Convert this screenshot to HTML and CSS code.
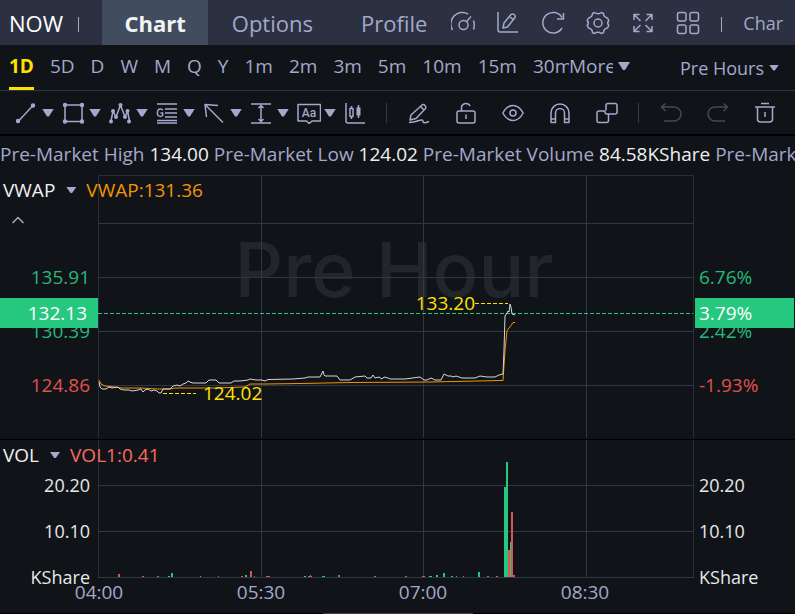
FILE: index.html
```html
<!DOCTYPE html>
<html lang="en">
<head>
<meta charset="utf-8">
<title>Chart</title>
<link rel="stylesheet" href="styles.css">
</head>
<body>
<header class="topbar">
  <span class="symbol">NOW</span>
  <span class="bar-sep"></span>
  <nav class="tabs">
    <a class="tab tab-active" href="#chart">Chart</a>
    <a class="tab" href="#options">Options</a>
    <a class="tab" href="#profile">Profile</a>
  </nav>
  <div class="top-actions">
    <button class="icon-btn" aria-label="Performance"><svg viewBox="0 0 24 24"><path d="M1.500 19A11.500 11.500 0 0 1 17 3M22.500 9.500q1.500 5 0 9"/><circle cx="12.500" cy="14" r="4.500"/><path d="m15.500 10.500 4.500-5"/></svg></button>
    <button class="icon-btn" aria-label="Annotate"><svg viewBox="0 0 24 24"><path d="M2 1v18q0 2 2 2h18M7 17l1-5 7-8.500q1.500-1.200 3.200 0t.6 3.200L11.500 16zM13.500 5.500l3.500 3"/></svg></button>
    <button class="icon-btn" aria-label="Refresh"><svg viewBox="0 0 24 24"><path d="M21 17A10.300 10.300 0 1 1 21 6.500M22.500 2v6H16"/></svg></button>
    <button class="icon-btn" aria-label="Settings"><svg viewBox="0 0 24 24"><circle cx="12" cy="12" r="4"/><path d="M8.500 1.500q3.500 2.500 7 0l2 1q0 3.500 4 4.500l1.300 2.500q-2.300 2.500 0 5L21.500 17q-4 1-4 4.500l-2 1q-3.500-2.500-7 0l-2-1q0-3.500-4-4.500L1.200 14.500q2.300-2.500 0-5L2.500 7q4-1 4-4.500z"/></svg></button>
    <button class="icon-btn" aria-label="Full screen"><svg viewBox="0 0 24 24"><path d="M3 9V3.500h5.500M3.500 4l6 6M15.500 3.500H21V9M20.500 4l-6 6M3 15v5.500h5.500M3.500 20l6-6M21 15v5.500h-5.500M20.500 20l-6-6"/></svg></button>
    <button class="icon-btn" aria-label="Layout"><svg viewBox="0 0 24 24"><rect x="1.500" y="1.500" width="8.500" height="8.500" rx="2"/><rect x="14" y="1.500" width="8.500" height="8.500" rx="2"/><rect x="1.500" y="14" width="8.500" height="8.500" rx="2"/><rect x="14" y="14" width="8.500" height="8.500" rx="2"/></svg></button>
  </div>
  <span class="bar-sep"></span>
  <a class="more-link" href="#charts">Char</a>
</header>

<div class="periods">
  <div class="period-list">
    <button class="period period-active">1D</button>
    <button class="period">5D</button>
    <button class="period">D</button>
    <button class="period">W</button>
    <button class="period">M</button>
    <button class="period">Q</button>
    <button class="period">Y</button>
    <button class="period">1m</button>
    <button class="period">2m</button>
    <button class="period">3m</button>
    <button class="period">5m</button>
    <button class="period">10m</button>
    <button class="period">15m</button>
    <button class="period">30m</button>
  </div>
  <button class="period more"><span class="more-text">More</span><span class="caret"></span></button>
  <button class="period session">Pre Hours<span class="caret caret-small"></span></button>
</div>

<div class="toolbar">
  <button class="tool" aria-label="Line"><svg viewBox="0 0 22 22"><path d="m4 18.500 14-15"/><g class="dots"><circle cx="3" cy="19" r="2.200"/><circle cx="18" cy="3.500" r="2.200"/></g></svg><span class="caret"></span></button>
  <button class="tool" aria-label="Rectangle"><svg viewBox="0 0 22 22"><path d="M3 3h17v16.500H3z"/><g class="dots"><circle cx="3" cy="3" r="2.200"/><circle cx="20" cy="3" r="2.200"/><circle cx="3" cy="19.500" r="2.200"/><circle cx="20" cy="19.500" r="2.200"/></g></svg><span class="caret"></span></button>
  <button class="tool" aria-label="Wave"><svg viewBox="0 0 22 22"><path d="m2 19 2-10 3 6 4.500-12L16 15l2.500-6 2 10"/><g class="dots"><circle cx="2" cy="19.500" r="2"/><circle cx="4" cy="9" r="2"/><circle cx="7" cy="15" r="2"/><circle cx="11.500" cy="3" r="2"/><circle cx="16" cy="15" r="2"/><circle cx="18.500" cy="9" r="2"/><circle cx="20" cy="19.500" r="2"/></g></svg><span class="caret"></span></button>
  <button class="tool" aria-label="Gann"><svg viewBox="0 0 22 22"><path d="M1 2h20M9 7h12M9 11h12M9 15h12M1 18.500h20M1 21h20M7 8q-3-2-4.700 0t-.3 5.500q2.500 1.800 4.700 0V11H4.500"/></svg><span class="caret"></span></button>
  <button class="tool" aria-label="Arrow"><svg viewBox="0 0 22 22"><path d="M20 20.500 2 2.500M3.500 15 2 2.500 15 3.500"/></svg><span class="caret"></span></button>
  <button class="tool" aria-label="Measure"><svg viewBox="0 0 22 22"><path d="M1 2h20M1 21h20M11 3.500v16M8.500 6 11 3.500 13.500 6M8.500 17l2.500 2.500 2.500-2.500"/></svg><span class="caret"></span></button>
  <button class="tool tool-wide" aria-label="Text"><svg viewBox="0 0 24 22"><path d="M1 2.500h22.500V19H15l-2.800 2.500L9.500 19H1z"/><text x="12" y="15" class="tool-text">Aa</text></svg><span class="caret"></span></button>
  <button class="tool tool-last" aria-label="Candles"><svg viewBox="0 0 22 22"><path d="M2 1v18q0 2 2 2h17M6 6.500h3v8H6zM7.500 4v2.500M7.500 14.500V17M14.500 3v13"/><path class="solid" d="M12.500 5.500h4v8h-4z"/></svg></button>
  <span class="tool-sep"></span>
  <button class="tool" aria-label="Brush"><svg viewBox="0 0 22 22"><path d="m2 18 1-5L14 3q1.500-1 3 .500t.500 3L8 16.500 2 18zM12.500 4.500l3.500 3.500M1 20.500q6-.500 10-2t4 1 6 0"/></svg></button>
  <button class="tool" aria-label="Unlock"><svg viewBox="0 0 22 22"><rect x="2" y="9" width="18" height="12" rx="2"/><path d="M6.500 9V5q1-3.500 4.500-3.500 3 0 4 2.500M11 12.500v4.500"/></svg></button>
  <button class="tool" aria-label="Show"><svg viewBox="0 0 22 22"><path d="M.8 11Q5 3.500 11 3.500T21.200 11Q17 18.500 11 18.500T.8 11z"/><circle cx="11" cy="11" r="3"/></svg></button>
  <button class="tool" aria-label="Magnet"><svg viewBox="0 0 22 22"><path d="M2 20.500V11a9 9 0 0 1 18 0v9.500h-4.500V11a4.500 4.500 0 0 0-9 0v9.500zM2 17h4.500M15.500 17H20"/></svg></button>
  <button class="tool tool-last" aria-label="Combine"><svg viewBox="0 0 22 22"><path d="M10 8.500V3.500Q10 1.500 12 1.500h7q2 0 2 2v6.500q0 2-2 2h-6.500"/><path d="M9 9H3q-2 0-2 2v7.500q0 2 2 2h7.500q2 0 2-2V12H11q-2 0-2-2z"/></svg></button>
  <span class="tool-sep"></span>
  <button class="tool" aria-label="Undo" disabled><svg viewBox="0 0 22 22"><path d="M5.500 1.500 1.500 5l4 4M1.500 5H14a6.500 6.500 0 0 1 0 14H4"/></svg></button>
  <button class="tool" aria-label="Redo" disabled><svg viewBox="0 0 22 22"><path d="m16.500 1.500 4 3.500-4 4M20.500 5H8a6.500 6.500 0 0 0 0 14h10"/></svg></button>
  <button class="tool tool-last" aria-label="Delete"><svg viewBox="0 0 22 22"><path d="M7 1.500h8M1 5h20M3.500 5v12q0 3 3 3h9q3 0 3-3V5M11 10v5"/></svg></button>
</div>

<div class="quotes">
  <span>Pre-Market High <b>134.00</b></span>
  <span>Pre-Market Low <b>124.02</b></span>
  <span>Pre-Market Volume <b>84.58KShare</b></span>
  <span>Pre-Market</span>
</div>

<main>
  <section class="pane price-pane">
    <div class="indicator"><button class="indicator-name">VWAP<span class="caret caret-small"></span></button><span class="vwap">VWAP:131.36</span></div>
    <button class="collapse" aria-label="Collapse"><svg viewBox="0 0 14 8"><path d="M1.500 7 7 1.500 12.500 7"/></svg></button>
    <div class="axis axis-left price-axis">
      <span class="up">135.91</span><span class="up">130.39</span><span class="down">124.86</span>
      <strong class="tag">132.13</strong>
    </div>
    <div class="plot">
      <span class="watermark">Pre Hour</span>
      <svg class="chart" viewBox="98 175 596 264" preserveAspectRatio="none">
        <path class="edge" d="M98.500 438V175.500H693.500V438"/>
        <path class="grid" d="M98 223.500H693M98 277.500H693M98 331.500H693M98 385.500H693M261.500 175V438M423.500 175V438M586.500 175V438"/>
        <path class="last" d="M98 313.500H693"/>
        <path class="line-vwap" d="M99 380l2 4 4 2 10 1 7 1h18l18 1h12l5-1h40l30-1 5-3h15l35-.500 50-1 80-.500 70-1.500h3l2-30 2-20 4-5 2-3h2"/>
        <path class="line-price" d="M99 382L100 387 102 389 106 389 109 387 112 388 118 387 120 389 124 390 129 390 132 391 138 390 141 389 143 392 145 390 148 389 151 391 154 390 157 391 159 393 161 393 163 389 170 389 173 386 177 385 180 386 183 384 186 383 188 381 190 382 193 383 206 383 209 380 216 380 219 383 231 383 234 381 240 381 248 380 250 379 256 380 262 380 265 381 268 379.500 293 379 305 378 308 377 320 377 323 371 324 375 325 376 337 376 340 380 350 380 355 377 365 376 367 378 371 378 373 375 375 378 379 377 382 379 384 377 388 378 390 379 405 379 420 377 424 380 427 380 431 378 435 380 441 380 444 374 448 376 451 376 453 377 456 376 462 378 475 378 480 376 487 377 495 377 499 375 503 374 504 350 505 316 507 313 508 311 509 312 510 304 511 307 512 314 515 315"/>
        <path class="mark" d="M163 393.500H196M475 303.500H508"/>
      </svg>
      <span class="note note-high">133.20</span>
      <span class="note note-low">124.02</span>
    </div>
    <div class="axis axis-right price-axis">
      <span class="up">6.76%</span><span class="up">2.42%</span><span class="down">-1.93%</span>
      <strong class="tag">3.79%</strong>
    </div>
  </section>

  <section class="pane volume-pane">
    <div class="indicator"><button class="indicator-name">VOL<span class="caret caret-small"></span></button><span class="vol">VOL1:0.41</span></div>
    <div class="axis axis-left volume-axis"><span>20.20</span><span>10.10</span><span>KShare</span></div>
    <div class="plot">
      <svg class="chart" viewBox="98 440 596 138" preserveAspectRatio="none">
        <path class="edge" d="M98.500 440V577.500M693.500 440V577.500"/>
        <path class="grid" d="M98 485.500H693M98 531.500H693M98 577.500H694M261.500 440V577M423.500 440V577M586.500 440V577"/>
        <path class="bar-up" d="M504 487h2v90h-2zM506 462h2v115h-2zM510 542h1v35h-1zM171 573h2v4h-2zM245 575h2v2h-2zM443 573h2v4h-2zM478 572h2v5h-2zM322 576h3v1h-3zM429 576h3v1h-3zM436 575h2v2h-2zM451 576h2v1h-2zM304 576h2v1h-2zM168 576h2v1h-2zM200 576h1v1h-1zM456 576h1v1h-1z"/>
        <path class="bar-down" d="M508 550h2v27h-2zM511 512h2v65h-2zM513 575h2v2h-2zM118 574h2v3h-2zM142 576h2v1h-2zM157 576h2v1h-2zM218 576h1v1h-1zM241 576h2v1h-2zM250 571h2v6h-2zM254 576h1v1h-1zM266 576h4v1h-4zM308 576h4v1h-4zM310 575h1v1h-1zM338 575h2v2h-2zM374 576h2v1h-2zM405 576h2v1h-2zM422 576h3v1h-3zM463 576h1v1h-1zM487 576h2v1h-2zM496 576h2v1h-2z"/>
      </svg>
    </div>
    <div class="axis axis-right volume-axis"><span>20.20</span><span>10.10</span><span>KShare</span></div>
  </section>
  <div class="times"><span>04:00</span><span>05:30</span><span>07:00</span><span>08:30</span></div>
</main>
<footer class="grip"><span></span></footer>
</body>
</html>
```

FILE: styles.css
```css
* { box-sizing: border-box; }
body {
  margin: 0;
  background: #101418;
  color: #a4a8cb;
  font: 19px/24px "Open Sans", "Noto Sans", sans-serif;
  overflow: hidden;
}
button {
  padding: 0;
  border: 0;
  background: none;
  color: inherit;
  font: inherit;
  white-space: nowrap;
}
a { color: inherit; text-decoration: none; }
svg {
  display: block;
  fill: none;
  stroke: currentColor;
  stroke-width: 1.5;
  stroke-linejoin: round;
}
.caret {
  display: inline-block;
  flex: none;
  width: 12px;
  height: 8px;
  background: currentColor;
  clip-path: polygon(0 0, 100% 0, 58% 100%, 42% 100%);
}
.caret-small { width: 10px; height: 6px; }

.topbar {
  display: flex;
  align-items: center;
  height: 45px;
  padding-left: 9px;
  background: #2b3141;
  font-size: 22px;
}
.symbol { width: 70px; color: #fff; }
.bar-sep { flex: none; width: 1px; height: 15px; margin-top: 4px; background: #a4a8cb; }
.tabs { display: flex; align-self: stretch; margin-left: 23px; }
.tab { display: flex; align-items: center; padding: 0 24px; }
.tab-active { padding: 0 22px; background: #414c5e; color: #f3f4f6; font-weight: 700; }
.top-actions { display: flex; flex: none; gap: 21px; margin-left: auto; margin-right: 21px; }
.icon-btn svg { width: 24px; height: 24px; }
.more-link { width: 40px; margin: 0 12px 0 21px; overflow: hidden; font-size: 18px; }

.periods {
  display: flex;
  height: 46px;
  padding: 0 16px 0 9px;
  border-bottom: 1px solid #2f3347;
}
.period-list { display: flex; flex: 0 1 560px; gap: 16px; overflow: hidden; }
.period { flex: none; height: 45px; border-bottom: 3px solid transparent; }
.period-active { border-color: #ffe100; color: #ffe100; font-weight: 700; }
.more, .session { display: flex; align-items: center; gap: 5px; }
.more-text { width: 44px; overflow: hidden; text-align: left; }
.session { margin-left: auto; padding-top: 3px; font-size: 18px; }

.toolbar {
  display: flex;
  align-items: center;
  height: 45px;
  padding-left: 15px;
  border-bottom: 2px solid #000;
}
.tool { display: flex; flex: none; align-items: center; gap: 5px; width: 47px; }
.tool svg { flex: none; width: 22px; height: 22px; }
.tool:disabled { opacity: .35; }
.tool-wide { gap: 3px; }
.tool-wide svg { width: 24px; }
.tool-last { width: 22px; }
.tool-sep { flex: none; width: 1px; height: 20px; margin: 0 21px 0 20px; background: #333949; }
.dots, .solid { fill: currentColor; stroke: none; }
.tool-text { fill: currentColor; stroke: none; font: 500 12px Roboto, sans-serif; text-anchor: middle; }

.quotes { display: flex; gap: 5px; height: 39px; padding-top: 6px; overflow: hidden; white-space: nowrap; }
.quotes b { color: #f0f0f0; font-weight: 400; }

.pane { display: grid; grid-template: 100% / 98px 1fr 101px; position: relative; }
.price-pane { height: 264px; }
.volume-pane { height: 139px; border-top: 1px solid #000; }
.plot { position: relative; min-width: 0; }
.chart { position: absolute; inset: 0; width: 100%; height: 100%; stroke-width: 1; }
.edge { stroke: #282d37; }
.grid { stroke: #2e3845; }
.last { stroke: #26c87f; stroke-dasharray: 4 2; }
.mark { stroke: #ffe100; stroke-dasharray: 4 2; }
.line-vwap { stroke: #f59300; }
.line-price { stroke: #d5d6d8; }
.bar-up { fill: #26c87f; stroke: none; }
.bar-down { fill: #dc5350; stroke: none; }

.indicator { position: absolute; z-index: 2; top: 3px; left: 3px; display: flex; gap: 10px; }
.indicator-name { display: flex; align-items: center; gap: 11px; color: #f0f0f0; }
.indicator-name .caret { background: #a4a8cb; }
.vwap { color: #f59300; }
.vol { color: #f96b5f; }
.collapse { position: absolute; z-index: 2; top: 41px; left: 11px; }
.collapse svg { width: 14px; height: 8px; }

.axis { display: flex; flex-direction: column; position: relative; }
.axis-left { padding-right: 8px; text-align: right; }
.axis-right { padding-left: 5px; }
.price-axis { padding-top: 75px; line-height: 54px; }
.volume-axis { padding-top: 22px; color: #e8e8e8; font-size: 18px; line-height: 46px; }
.up { color: #27b877; }
.down { color: #e2504e; }
.tag {
  position: absolute;
  top: 123px;
  left: 0;
  right: 0;
  height: 30px;
  background: #26c87f;
  color: #fff;
  font-weight: 400;
  line-height: 30px;
}
.axis-left .tag { padding-right: 11px; }
.axis-right .tag { left: 1px; right: 1px; padding-left: 4px; }

.watermark {
  position: absolute;
  top: 58px;
  left: 0;
  right: 4px;
  color: #222529;
  font: 500 76px/72px Inter, sans-serif;
  text-align: center;
  white-space: nowrap;
}
.note { position: absolute; color: #ffe100; }
.note-high { top: 116px; right: 219px; }
.note-low { top: 206px; left: 105px; }

.times {
  display: grid;
  grid-template-columns: repeat(4, 1fr);
  height: 35px;
  padding: 2px 129px 0 18px;
  text-align: center;
}
.grip { display: flex; justify-content: center; background: #000; }
.grip span { width: 150px; height: 1px; background: #3d4153; }
```
